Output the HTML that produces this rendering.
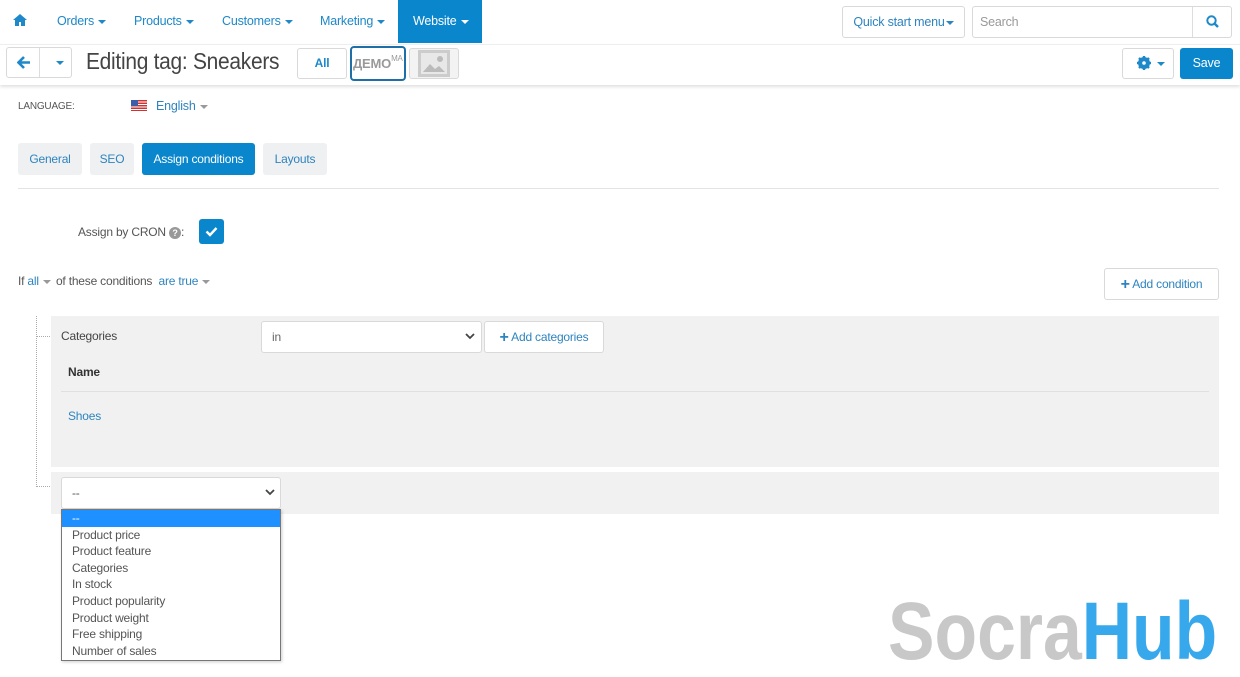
<!DOCTYPE html>
<html><head><meta charset="utf-8"><style>
*{box-sizing:border-box;margin:0;padding:0}
body{width:1240px;height:667px;overflow:hidden;background:#fff;font-family:"Liberation Sans",sans-serif;font-size:12px;color:#555;position:relative;letter-spacing:-0.2px}
.a{position:absolute}
.nav{color:#1e88c8;font-size:12.5px;top:14px;white-space:nowrap}
.car{display:inline-block;width:0;height:0;border-left:4px solid transparent;border-right:4px solid transparent;border-top:4px solid currentColor;vertical-align:middle;margin-left:4px}
.btn{position:absolute;border:1px solid #d9d9d9;border-radius:3px;background:#fff}
.tab{position:absolute;top:143px;height:32px;background:#eef0f2;border-radius:3px;color:#2d84bf;font-size:12px;line-height:32px;text-align:center}
.opt{height:16.6px;line-height:16.6px;padding-left:10px;color:#555;font-size:12px}
</style></head><body>
<div class="a" style="left:0;top:0;width:1240px;height:44px;background:#fff"></div>
<svg class="a" style="left:13px;top:14px" width="14" height="12" viewBox="0 0 14 12"><path d="M7 0L0 6h2v6h4V8h2v4h4V6h2z" fill="#1e88c8"/></svg>
<div class="a nav" style="left:57px">Orders<span class="car"></span></div>
<div class="a nav" style="left:134px">Products<span class="car"></span></div>
<div class="a nav" style="left:222px">Customers<span class="car"></span></div>
<div class="a nav" style="left:320px">Marketing<span class="car"></span></div>
<div class="a" style="left:398px;top:0;width:84px;height:43px;background:#0a86cc"></div>
<div class="a nav" style="left:413px;color:#fff">Website<span class="car"></span></div>
<div class="btn" style="left:842px;top:6px;width:123px;height:32px;color:#2d84bf;font-size:12.5px;line-height:30px;text-align:center">Quick start menu<span class="car" style="margin-left:1px"></span></div>
<div class="btn" style="left:972px;top:6px;width:260px;height:32px;color:#999;font-size:12.5px;line-height:30px;padding-left:7px">Search</div>
<div class="a" style="left:1192px;top:7px;width:1px;height:30px;background:#ddd"></div>
<svg class="a" style="left:1206px;top:15px" width="13" height="13" viewBox="0 0 13 13"><circle cx="5.5" cy="5.5" r="4.2" fill="none" stroke="#1e88c8" stroke-width="2"/><path d="M8.5 8.5l3.5 3.5" stroke="#1e88c8" stroke-width="2.4"/></svg>
<div class="a" style="left:0;top:44px;width:1240px;height:41px;border-top:1px solid #eee;box-shadow:0 2px 3px rgba(0,0,0,.12);background:#fff"></div>
<div class="btn" style="left:6px;top:47px;width:66px;height:31px"></div>
<div class="a" style="left:39px;top:48px;width:1px;height:29px;background:#ddd"></div>
<svg class="a" style="left:17px;top:56px" width="14" height="13" viewBox="0 0 14 13"><path d="M7 1L1.5 6.5 7 12M2 6.5h11" fill="none" stroke="#1e88c8" stroke-width="2.6"/></svg>
<div class="a" style="left:56px;top:55px;color:#1e88c8"><span class="car" style="margin:0"></span></div>
<div class="a" style="left:86px;top:48px;font-size:23px;color:#444;letter-spacing:-.3px;transform:scaleX(0.91);transform-origin:left;white-space:nowrap">Editing tag: Sneakers</div>
<div class="btn" style="left:297px;top:48px;width:50px;height:31px;color:#1e88c8;font-weight:bold;text-align:center;line-height:29px">All</div>
<div class="a" style="left:350px;top:46px;width:56px;height:35px;border:2px solid #1e6fa8;border-radius:4px;overflow:hidden;font-weight:bold;color:#999;font-size:13px;line-height:31px;padding-left:1px;white-space:nowrap">ДЕМО<span style="font-size:8px;font-weight:normal;vertical-align:top;line-height:22px">MA</span></div>
<div class="btn" style="left:409px;top:48px;width:50px;height:31px;background:#f3f3f3"></div>
<div class="a" style="left:418px;top:50px;width:32px;height:27px;background:#ccc"></div>
<svg class="a" style="left:421px;top:53px" width="26" height="21" viewBox="0 0 26 21"><rect x="0" y="0" width="26" height="21" fill="#e8e8e8"/><path d="M2 19l7-8 5 5 4-3 6 6z" fill="#bbb"/><circle cx="19" cy="6" r="3" fill="#bbb"/></svg>
<div class="btn" style="left:1122px;top:48px;width:52px;height:31px"></div>
<svg class="a" style="left:1137px;top:56px" width="14" height="14" viewBox="0 0 14 14"><circle cx="7" cy="7" r="4.5" fill="none" stroke="#1e88c8" stroke-width="3"/><path d="M7 0v14M0 7h14M2 2l10 10M12 2L2 12" stroke="#1e88c8" stroke-width="2.4"/><circle cx="7" cy="7" r="1.8" fill="#fff"/></svg>
<div class="a" style="left:1153px;top:56px;color:#1e88c8"><span class="car"></span></div>
<div class="a" style="left:1180px;top:48px;width:53px;height:31px;background:#0a86cc;border-radius:3px;color:#fff;text-align:center;line-height:31px;font-size:12.5px">Save</div>
<div class="a" style="left:18px;top:101px;font-size:10px;color:#555">LANGUAGE:</div>
<svg class="a" style="left:131px;top:100px" width="16" height="11" viewBox="0 0 16 11"><rect width="16" height="11" fill="#c33"/><path d="M0 2h16M0 4.5h16M0 7h16M0 9.5h16" stroke="#fff" stroke-width="1"/><rect width="7" height="6" fill="#3b5ea8"/></svg>
<div class="a" style="left:156px;top:99px;color:#2d84bf;font-size:12.5px">English<span class="car" style="color:#999"></span></div>
<div class="tab" style="left:18px;width:64px">General</div>
<div class="tab" style="left:90px;width:44px">SEO</div>
<div class="tab" style="left:142px;width:113px;background:#0a86cc;color:#fff">Assign conditions</div>
<div class="tab" style="left:263px;width:64px">Layouts</div>
<div class="a" style="left:18px;top:188px;width:1201px;height:1px;background:#e3e3e3"></div>
<div class="a" style="left:78px;top:225px;color:#555">Assign by CRON <span style="display:inline-block;width:12px;height:12px;border-radius:50%;background:#999;color:#fff;font-size:9px;text-align:center;line-height:12px;font-weight:bold">?</span>:</div>
<div class="a" style="left:199px;top:219px;width:25px;height:25px;background:#0a86cc;border-radius:3px"></div>
<svg class="a" style="left:205px;top:226px" width="13" height="11" viewBox="0 0 13 11"><path d="M1.5 5.5l3.5 3.5 6.5-7" fill="none" stroke="#fff" stroke-width="2.4"/></svg>
<div class="a" style="left:18px;top:274px;color:#555;white-space:nowrap;font-size:12px">If <span style="color:#2d84bf">all</span><span class="car" style="color:#999;margin-right:2px"></span> of these conditions &nbsp;<span style="color:#2d84bf">are true</span><span class="car" style="color:#999"></span></div>
<div class="btn" style="left:1104px;top:268px;width:115px;height:32px;color:#2d84bf;text-align:center;line-height:30px"><b style="font-size:16px;vertical-align:-1px">+</b> Add condition</div>
<div class="a" style="left:36px;top:316px;height:171px;border-left:1px dotted #aaa"></div>
<div class="a" style="left:36px;top:336px;width:14px;border-top:1px dotted #aaa"></div>
<div class="a" style="left:36px;top:486px;width:14px;border-top:1px dotted #aaa"></div>
<div class="a" style="left:51px;top:316px;width:1168px;height:151px;background:#f1f1f1"></div>
<div class="a" style="left:61px;top:329px;color:#444">Categories</div>
<div class="btn" style="left:261px;top:321px;width:221px;height:32px;color:#666;line-height:30px;padding-left:10px">in</div>
<svg class="a" style="left:465px;top:333px" width="10" height="7" viewBox="0 0 10 7"><path d="M1 1l4 4 4-4" fill="none" stroke="#444" stroke-width="1.8"/></svg>
<div class="btn" style="left:484px;top:321px;width:120px;height:32px;color:#2d84bf;text-align:center;line-height:30px"><b style="font-size:16px;vertical-align:-1px">+</b> Add categories</div>
<div class="a" style="left:68px;top:365px;color:#333;font-weight:bold">Name</div>
<div class="a" style="left:61px;top:391px;width:1148px;height:1px;background:#e0e0e0"></div>
<div class="a" style="left:68px;top:409px;color:#2d84bf">Shoes</div>
<div class="a" style="left:51px;top:472px;width:1168px;height:42px;background:#f1f1f1"></div>
<div class="btn" style="left:61px;top:477px;width:220px;height:32px;color:#555;line-height:30px;padding-left:10px">--</div>
<svg class="a" style="left:265px;top:489px" width="10" height="7" viewBox="0 0 10 7"><path d="M1 1l4 4 4-4" fill="none" stroke="#444" stroke-width="1.8"/></svg>
<div class="a" style="left:61px;top:509px;width:220px;height:152px;border:1px solid #777;background:#fff;box-shadow:1px 1px 3px rgba(0,0,0,.2)">
<div class="opt" style="background:#1e90ff;color:#fff">--</div>
<div class="opt">Product price</div><div class="opt">Product feature</div><div class="opt">Categories</div><div class="opt">In stock</div><div class="opt">Product popularity</div><div class="opt">Product weight</div><div class="opt">Free shipping</div><div class="opt">Number of sales</div>
</div>
<div class="a" style="left:888px;top:591px;font-size:82px;font-weight:bold;letter-spacing:0;line-height:82px;white-space:nowrap;transform:scaleX(0.85);transform-origin:left"><span style="color:#c8c8c8">Socra</span><span style="color:#38a8ec">Hub</span></div>
</body></html>
